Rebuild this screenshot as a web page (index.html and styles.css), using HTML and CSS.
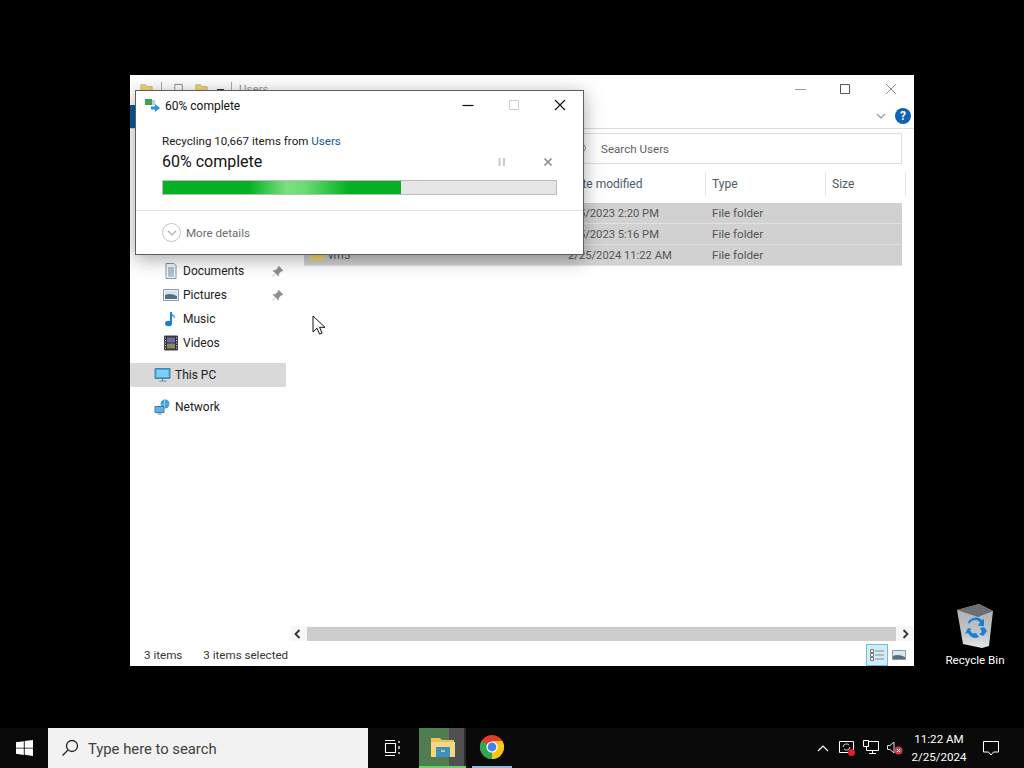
FILE: index.html
```html
<!DOCTYPE html>
<html lang="en">
<head>
<meta charset="utf-8">
<title>60% complete</title>
<link rel="stylesheet" href="styles.css">
</head>
<body>
<div class="desktop">
  <section class="explorer">
    <header class="ex-title">
      <svg class="qa-icon" viewBox="0 0 14 14"><path d="M1 2h5l1 2h6v9H1z" fill="#f3d878" stroke="#d4b35a"/></svg>
      <span class="qa-sep qa-sep-first"></span>
      <svg class="qa-icon qa-props" viewBox="0 0 14 14"><path d="M2 1.500h8v11H2z" fill="#fff" stroke="#888"/><path d="M7 8h6v5H7z" fill="#ddd" stroke="#777"/></svg>
      <svg class="qa-icon qa-new" viewBox="0 0 14 14"><path d="M1 2h5l1 2h6v9H1z" fill="#f3d878" stroke="#d4b35a"/></svg>
      <span class="qa-dash"></span>
      <span class="qa-sep qa-sep-last"></span>
      <span class="ex-name">Users</span>
      <div class="win-controls">
        <svg class="ctl" viewBox="0 0 12 12"><path d="M0 6.500h11" stroke="#9a9a9a"/></svg>
        <svg class="ctl" viewBox="0 0 12 12"><path d="M.5 1.500h9v9h-9z" fill="none" stroke="#555"/></svg>
        <svg class="ctl" viewBox="0 0 12 12"><path d="M1 1l10 10M11 1L1 11" stroke="#8a8a8a"/></svg>
      </div>
    </header>
    <div class="ribbon">
      <span class="file-tab"></span>
      <svg class="rib-chev" viewBox="0 0 10 6"><path d="M1 1l4 4 4-4" fill="none" stroke="#999" stroke-width="1.200"/></svg>
      <span class="help">?</span>
    </div>
    <div class="address">
      <div class="search">
        <svg class="search-icon" viewBox="0 0 12 12"><circle cx="6.500" cy="5" r="4" fill="none" stroke="#999"/><path d="M3.500 8L1 11" stroke="#999"/></svg>
        <span class="search-label">Search Users</span>
      </div>
    </div>
    <div class="ex-body">
      <nav class="nav">
        <div class="nav-item"><svg class="nav-icon" viewBox="0 0 16 16"><path d="M3 .5h8l2 2v13H3z" fill="#f4f8fb" stroke="#7d98ad"/><path d="M5 5h6M5 7h6M5 9h6M5 11h6M5 13h6" stroke="#6f8ea6"/></svg><span class="nav-text">Documents</span><svg class="pin" viewBox="0 0 12 12"><path d="M7 0l5 5-2 .6-2.500 2.500L7 11 1 5l3-.5 2.500-2.500zM3.500 8L.5 11.500" fill="#8f8f8f" stroke="#8f8f8f" stroke-width=".6"/></svg></div>
        <div class="nav-item"><svg class="nav-icon" viewBox="0 0 16 16"><path d="M.5 2.500h15v11H.5z" fill="#eef3f7" stroke="#8b9bab"/><path d="M2 4h12v4H2z" fill="#cfe3f1"/><path d="M2 8c4-2 8-1 12 1v3H2z" fill="#56707e"/></svg><span class="nav-text">Pictures</span><svg class="pin" viewBox="0 0 12 12"><path d="M7 0l5 5-2 .6-2.500 2.500L7 11 1 5l3-.5 2.500-2.500zM3.500 8L.5 11.500" fill="#8f8f8f" stroke="#8f8f8f" stroke-width=".6"/></svg></div>
        <div class="nav-item"><svg class="nav-icon" viewBox="0 0 16 16"><path d="M8 1v11" stroke="#1c80cf" stroke-width="2"/><path d="M8 1c1 3 5 3 4 7-.5-2-2-3-4-3z" fill="#2b95e0"/><ellipse cx="5.500" cy="12.500" rx="3.500" ry="2.700" fill="#1c80cf"/></svg><span class="nav-text">Music</span></div>
        <div class="nav-item"><svg class="nav-icon" viewBox="0 0 16 16"><path d="M1.500 1h13v14h-13z" fill="#2f2f3a" stroke="#444"/><path d="M4 2.500h8v5H4z" fill="#6c6aa8"/><path d="M4 8.500h8v5H4z" fill="#8a8a5a"/><path d="M2.500 2.500v1M2.500 5v1M2.500 7.500v1M2.500 10v1M2.500 12.500v1M13.500 2.500v1M13.500 5v1M13.500 7.500v1M13.500 10v1M13.500 12.500v1" stroke="#ddd"/></svg><span class="nav-text">Videos</span></div>
        <div class="nav-item nav-root nav-active"><svg class="nav-icon" viewBox="0 0 16 16"><path d="M.5 1.500h15v10H.5z" fill="#38a8ea" stroke="#5b7f96"/><path d="M2 3h12v7H2z" fill="#7cd0f7"/><path d="M5 14h7M8 12v2" stroke="#6f8494"/></svg><span class="nav-text">This PC</span></div>
        <div class="nav-item nav-root nav-network"><svg class="nav-icon" viewBox="0 0 16 16"><circle cx="10.500" cy="5" r="4.500" fill="#3c9cdc"/><path d="M6 6c3-1 6-1 9-.5M10 .5v9" stroke="#bfe2f6" stroke-width=".7"/><path d="M.5 7.500h9v6h-9z" fill="#5ab4ea" stroke="#4d7c9b"/><path d="M3 15h4" stroke="#6f8494"/></svg><span class="nav-text">Network</span></div>
      </nav>
      <main class="list">
        <div class="list-head">
          <span class="col col-name">Name</span>
          <span class="col col-date">Date modified</span>
          <span class="col col-type">Type</span>
          <span class="col col-size">Size</span>
        </div>
        <div class="rows">
          <div class="row"><span class="cell col-name">Administrator</span><span class="cell col-date">9/5/2023 2:20 PM</span><span class="cell col-type">File folder</span></div>
          <div class="row"><span class="cell col-name">Public</span><span class="cell col-date">9/5/2023 5:16 PM</span><span class="cell col-type">File folder</span></div>
          <div class="row"><span class="cell col-name"><svg class="row-folder" viewBox="0 0 14 12"><path d="M0 1h5l1 2h8v9H0z" fill="#f3d878"/></svg>vm5</span><span class="cell col-date">2/25/2024 11:22 AM</span><span class="cell col-type">File folder</span></div>
        </div>
        <div class="h-scroll">
          <svg class="sb-arrow" viewBox="0 0 8 10"><path d="M6 1L2 5l4 4" fill="none" stroke="#333" stroke-width="1.800"/></svg>
          <span class="sb-thumb"></span>
          <svg class="sb-arrow" viewBox="0 0 8 10"><path d="M2 1l4 4-4 4" fill="none" stroke="#333" stroke-width="1.800"/></svg>
        </div>
      </main>
    </div>
    <footer class="status">
      <span class="st-count">3 items</span>
      <span>3 items selected</span>
      <div class="views">
        <span class="view view-on"><svg viewBox="0 0 16 14" class="view-svg"><path d="M1.500 1.500h3v3h-3zM1.500 5.500h3v3h-3zM1.500 9.500h3v3h-3z" fill="#fff" stroke="#777"/><path d="M6 3h9M6 7h9M6 11h9" stroke="#8a8a8a"/></svg></span>
        <span class="view"><svg viewBox="0 0 16 14" class="view-svg"><path d="M1.500 2.500h13v9h-13z" fill="#dbe9f2" stroke="#8b9bab"/><path d="M2 8c4-2 8-1 12 1v2H2z" fill="#56707e"/></svg></span>
      </div>
    </footer>
  </section>

  <section class="dialog">
    <header class="dlg-title">
      <svg class="dlg-icon" viewBox="0 0 16 14"><path d="M0 1h7v6H0z" fill="#3aa655"/><path d="M7 2h3v5H7z" fill="#b8d0e4"/><path d="M6 8.500h4V6l5 4-5 4v-2.500H6z" fill="#2b8fdc"/></svg>
      <span class="dlg-name">60% complete</span>
      <div class="dlg-controls">
        <svg class="dctl" viewBox="0 0 12 12"><path d="M.5 6.500h11" stroke="#111" stroke-width="1.200"/></svg>
        <svg class="dctl" viewBox="0 0 12 12"><path d="M1.500 1.500h9v9h-9z" fill="none" stroke="#ccc"/></svg>
        <svg class="dctl" viewBox="0 0 12 12"><path d="M1 1l10 10M11 1L1 11" stroke="#111" stroke-width="1.100"/></svg>
      </div>
    </header>
    <div class="dlg-main">
      <p class="dlg-line">Recycling 10,667 items from <span class="link">Users</span></p>
      <div class="dlg-status">
        <span class="dlg-pct">60% complete</span>
        <svg class="op-pause" viewBox="0 0 8 10"><path d="M1.500 1v8M6 1v8" stroke="#c9c9c9" stroke-width="2"/></svg>
        <svg class="op-close" viewBox="0 0 10 10"><path d="M1.500 1.500l7 7M8.500 1.500l-7 7" stroke="#8a8a8a" stroke-width="1.600"/></svg>
      </div>
      <div class="progress"><div class="progress-fill"></div></div>
    </div>
    <footer class="dlg-foot">
      <span class="more-circle"><svg viewBox="0 0 10 6" class="more-chev"><path d="M1 1l4 4 4-4" fill="none" stroke="#aaa" stroke-width="1.100"/></svg></span>
      <span class="more-text">More details</span>
    </footer>
  </section>

  <svg class="cursor" viewBox="0 0 14 21"><path d="M1 1v16l4-3.800 2.600 6 2.500-1.100-2.600-5.800H13z" fill="#fff" stroke="#111"/></svg>

  <div class="bin">
    <svg class="bin-icon" viewBox="0 0 40 46">
      <defs><linearGradient id="binBody" x1="0" y1="0" x2="0" y2="1"><stop offset="0" stop-color="#a9adb0"/><stop offset=".7" stop-color="#c4c8cb"/><stop offset="1" stop-color="#e6e9eb"/></linearGradient></defs>
      <path d="M2 7L24 1l14 7-4 35-7 2-19-4z" fill="url(#binBody)"/>
      <path d="M2 7L24 1l14 7-15 6z" fill="#6d6e70"/>
      <path d="M14 21c3-5 8-5 11-2l-2 4 6 0 0-7-2 1c-4-4-11-3-14 2zM13 25l-3 6 3-1c3 5 7 6 11 4l-3-4c-3 1-5 0-6-3l2-1zM29 24l-4 1 2 4-3 2 4 2 4-5z" fill="#1a7fd4"/>
    </svg>
    <span class="bin-label">Recycle Bin</span>
  </div>
</div>

<footer class="taskbar">
  <span class="start"><svg class="win-logo" viewBox="0 0 17 16"><path d="M0 2.300L7.800 1.200v6.500H0zM8.700 1.100L17 0v7.700H8.700zM0 8.500h7.800v6.400L0 13.800zM8.700 8.500H17V16l-8.300-1.200z" fill="#fff"/></svg></span>
  <div class="tb-search">
    <svg class="tb-search-icon" viewBox="0 0 18 18"><circle cx="11" cy="7" r="5.500" fill="none" stroke="#222" stroke-width="1.300"/><path d="M7 11l-5.500 5.500" stroke="#222" stroke-width="1.300"/></svg>
    <span class="tb-search-text">Type here to search</span>
  </div>
  <span class="tb-btn tb-view"><svg class="tb-view-icon" viewBox="0 0 17 16"><path d="M1 .5h10M1 15.500h10M1.500 3.500h10v9h-10z" fill="none" stroke="#fff" stroke-width="1.100"/><path d="M15 1v2M15 6v3M15 12v2" stroke="#fff" stroke-width="1.300"/></svg></span>
  <span class="tb-btn tb-files"><svg class="tb-app" viewBox="0 0 24 20"><path d="M0 1h9l2 2h12v5H0z" fill="#e9c05a"/><path d="M0 5h24v15H0z" fill="#f5d77f"/><path d="M5 10h14v10H5z" fill="#3d8fc4"/><path d="M10 13h4v2h-4z" fill="#d6c27a"/></svg></span>
  <span class="tb-btn tb-chrome"><svg class="tb-app-chrome" viewBox="0 0 24 24"><circle cx="12" cy="12" r="12" fill="#e33b2e"/><path d="M12 12L1.600 18A12 12 0 0 1 1.600 6z" fill="#2fa84f"/><path d="M12 12l-10.400 6A12 12 0 0 0 12 24a12 12 0 0 0 10.400-6z" fill="#2fa84f"/><path d="M12 6h10.400A12 12 0 0 1 12 24z" fill="#fbc60f"/><circle cx="12" cy="12" r="5.600" fill="#fff"/><circle cx="12" cy="12" r="4.400" fill="#3f85f2"/></svg></span>
  <div class="tray">
    <svg class="tray-chev" viewBox="0 0 12 7"><path d="M1 6l5-5 5 5" fill="none" stroke="#fff" stroke-width="1.200"/></svg>
    <span class="tray-slot"><svg class="tray-icon" viewBox="0 0 18 18"><path d="M1.500 2.500h14v11h-14z" fill="none" stroke="#fff"/><path d="M5 8a3.500 3.500 0 0 1 6-2M12 8a3.500 3.500 0 0 1-6 2" fill="none" stroke="#ddd"/><circle cx="13.500" cy="13.500" r="3.500" fill="#e01c2e"/></svg></span>
    <span class="tray-slot"><svg class="tray-icon" viewBox="0 0 18 18"><path d="M4.500 2.500h12v9h-12zM7 14.500h7M10.500 11.500v3" fill="none" stroke="#fff"/><path d="M1.500 1.500h5v6h-5z" fill="#111" stroke="#fff"/></svg></span>
    <span class="tray-slot"><svg class="tray-icon" viewBox="0 0 18 18"><path d="M1.500 6.500h2.500L8 3v11L4 10.500H1.500z" fill="none" stroke="#ddd"/><circle cx="12.500" cy="11.500" r="4" fill="#d6394c"/><path d="M11 10l3 3M14 10l-3 3" stroke="#fff"/></svg></span>
    <div class="clock"><span>11:22 AM</span><span>2/25/2024</span></div>
    <span class="notif"><svg class="notif-icon" viewBox="0 0 16 15"><path d="M.5.500h15v10.500H10.500L8 14 5.500 11H.5z" fill="none" stroke="#fff"/></svg></span>
  </div>
</footer>
</body>
</html>
```

FILE: styles.css
```css
* { box-sizing: border-box; }
html, body { margin: 0; padding: 0; }
body {
  width: 1024px;
  height: 768px;
  overflow: hidden;
  background: #000;
  display: flex;
  flex-direction: column;
  font-family: Roboto, "Noto Sans", sans-serif;
  font-size: 11.6px;
  color: #1c1c1c;
}
.desktop { position: relative; flex: 1; }

/* Explorer window */
.explorer {
  position: absolute;
  left: 130px;
  top: 75px;
  width: 784px;
  height: 591px;
  background: #fff;
  display: flex;
  flex-direction: column;
}
.ex-title {
  height: 28px;
  display: flex;
  align-items: center;
  padding-left: 10px;
  flex: none;
}
.qa-icon { width: 13px; height: 13px; }
.qa-sep { width: 1px; height: 14px; background: #aaa; }
.qa-sep-first { margin-left: 8px; }
.qa-props { margin-left: 11px; }
.qa-new { margin-left: 9px; }
.qa-dash { width: 7px; height: 1px; background: #333; margin-left: 9px; }
.qa-sep-last { margin-left: 7px; }
.ex-name { color: #9a9a9a; margin-left: 7px; }
.win-controls {
  margin-left: auto;
  display: flex;
  gap: 33px;
  padding-right: 17px;
}
.ctl { width: 12px; height: 12px; }
.ribbon {
  height: 26px;
  flex: none;
  display: flex;
  align-items: center;
  border-bottom: 1px solid #dcdcdc;
  position: relative;
}
.file-tab { width: 6px; height: 23px; background: #0a5a9e; align-self: flex-start; margin-top: 2px; }
.rib-chev { width: 10px; height: 6px; margin-left: auto; margin-right: 9px; }
.help {
  width: 16px;
  height: 16px;
  border-radius: 50%;
  background: #0f62b0;
  color: #fff;
  font-size: 12px;
  font-weight: 700;
  line-height: 16px;
  text-align: center;
  margin-right: 3px;
}
.address {
  height: 43px;
  flex: none;
  display: flex;
  justify-content: flex-end;
  padding: 4px 12px 8px 0;
}
.search {
  width: 341px;
  border: 1px solid #dfdfdf;
  display: flex;
  align-items: center;
  padding-left: 13px;
  color: #5f5f5f;
}
.search-icon { width: 12px; height: 12px; margin-right: 14px; }
.ex-body { flex: 1; display: flex; min-height: 0; }
.nav { width: 156px; flex: none; padding-top: 87px; margin-right: 5px; font-size: 12px; }
.nav-item {
  height: 24px;
  display: flex;
  align-items: center;
  padding-left: 33px;
  position: relative;
  color: #222;
}
.nav-icon { width: 16px; height: 16px; flex: none; margin-right: 4px; }
.nav-root { padding-left: 24px; height: 24px; margin-top: 8px; }
.nav-root .nav-icon { margin-right: 4px; width: 17px; }
.nav-active { background: #d9d9d9; }
.pin { width: 11px; height: 11px; position: absolute; right: 3px; top: 7px; }

.list { flex: 1; display: flex; flex-direction: column; min-width: 0; }
.list-head { height: 24px; display: flex; align-items: center; flex: none; color: #4c5a69; margin-bottom: 7px; font-size: 12px; }
.col { height: 24px; display: flex; align-items: center; border-right: 1px solid #e5e5e5; }
.col-name { width: 271px; padding-left: 7px; flex: none; overflow: hidden; }
.col-date { width: 144px; padding-left: 6px; flex: none; white-space: nowrap; }
.col-type { width: 120px; padding-left: 6px; flex: none; }
.col-size { width: 80px; padding-left: 6px; flex: none; }
.rows { margin-left: 13px; width: 598px; flex: 1; }
.rows .col-name { width: 258px; }
.rows .col-date { font-size: 11.2px; }
.row {
  height: 21px;
  display: flex;
  align-items: center;
  background: #d1d1d1;
  color: #555;
  border-bottom: 1px solid #e2e2e2;
}
.cell { display: flex; align-items: center; }
.row-folder { width: 14px; height: 12px; margin-right: 4px; margin-left: -1px; }
.h-scroll {
  height: 15px;
  flex: none;
  margin-bottom: 3px;
  display: flex;
  align-items: center;
  gap: 3px;
  padding-right: 2px;
  background: #f7f7f7;
}
.sb-arrow { width: 13px; height: 10px; flex: none; }
.sb-thumb { flex: 1; height: 14px; background: #cdcdcd; }

.status {
  height: 22px;
  flex: none;
  display: flex;
  align-items: center;
  padding-left: 14px;
  color: #333;
}
.st-count { margin-right: 21px; }
.views { margin-left: auto; display: flex; gap: 3px; padding-right: 8px; align-items: center; }
.view { width: 22px; height: 22px; display: flex; align-items: center; justify-content: center; }
.view + .view { width: 15px; }
.view-on { background: #cdeefa; border: 1px solid #6cc0d6; }
.view-svg { width: 16px; height: 14px; flex: none; }

/* Progress dialog */
.dialog {
  position: absolute;
  left: 135px;
  top: 90px;
  width: 449px;
  height: 165px;
  background: #fff;
  border: 1px solid #5e5e5e;
  box-shadow: 0 4px 18px rgba(0, 0, 0, .35);
  display: flex;
  flex-direction: column;
}
.dlg-title { height: 28px; display: flex; align-items: center; padding-left: 9px; flex: none; }
.dlg-icon { width: 16px; height: 14px; margin-right: 4px; }
.dlg-name { color: #111; font-size: 12px; margin-top: 2px; }
.dlg-controls { margin-left: auto; display: flex; gap: 34px; padding-right: 17px; }
.dctl { width: 12px; height: 12px; }
.dlg-main { padding: 13px 26px 0; flex: none; height: 92px; border-bottom: 1px solid #e2e2e2; }
.dlg-line { margin: 0; line-height: 18px; color: #1a1a1a; }
.link { color: #0e5a9a; }
.dlg-status { height: 23px; display: flex; align-items: center; }
.dlg-pct { font-size: 16px; color: #111; flex: 1; }
.op-pause { width: 8px; height: 10px; margin-right: 37px; }
.op-close { width: 10px; height: 10px; margin-right: 4px; }
.progress {
  margin-top: 7px;
  width: 395px;
  height: 15px;
  background: #e6e6e6;
  border: 1px solid #bcbcbc;
}
.progress-fill {
  width: 60.6%;
  height: 100%;
  background: linear-gradient(90deg, #06b025 0%, #06b025 36%, #7be07f 52%, #6ada72 60%, #06b025 78%, #06b025 100%);
}
.dlg-foot { flex: 1; display: flex; align-items: center; padding-left: 26px; color: #6d6d6d; }
.more-circle {
  width: 19px;
  height: 19px;
  border: 1px solid #c4c4c4;
  border-radius: 50%;
  display: flex;
  align-items: center;
  justify-content: center;
  margin-right: 5px;
}
.more-chev { width: 10px; height: 6px; }

.cursor { position: absolute; left: 312px; top: 315px; width: 14px; height: 21px; }

.bin {
  position: absolute;
  left: 935px;
  top: 603px;
  width: 80px;
  display: flex;
  flex-direction: column;
  align-items: center;
  color: #fff;
}
.bin-icon { width: 40px; height: 46px; }
.bin-label { margin-top: 3px; line-height: 16px; white-space: nowrap; }

/* Taskbar */
.taskbar {
  height: 40px;
  flex: none;
  background: #0a0a0a;
  display: flex;
  align-items: stretch;
  color: #fff;
}
.start { width: 48px; display: flex; align-items: center; justify-content: center; }
.win-logo { width: 17px; height: 16px; }
.tb-search {
  width: 320px;
  background: #f2f2f2;
  display: flex;
  align-items: center;
  padding-left: 13px;
  color: #404040;
}
.tb-search-icon { width: 18px; height: 18px; margin-right: 9px; }
.tb-search-text { font-size: 14.8px; margin-top: 1px; }
.tb-btn { display: flex; align-items: center; justify-content: center; }
.tb-view { width: 51px; padding-right: 3px; }
.tb-view-icon { width: 17px; height: 16px; }
.tb-files {
  width: 47px;
  background: linear-gradient(90deg, #4f7d4f 0 64%, #505050 64% 96%, #2a2a2a 96%);
  border-bottom: 2px solid #5fd85f;
}
.tb-app { width: 24px; height: 20px; }
.tb-chrome { width: 40px; margin-left: 6px; border-bottom: 2px solid #8ab8e4; }
.tb-app-chrome { width: 24px; height: 24px; }
.tray { margin-left: auto; display: flex; align-items: center; padding-right: 13px; }
.tray-chev { width: 12px; height: 7px; margin-right: 6px; }
.tray-slot { width: 24px; display: flex; justify-content: center; }
.tray-icon { width: 18px; height: 18px; }
.clock {
  width: 64px;
  display: flex;
  flex-direction: column;
  align-items: center;
  line-height: 18px;
  white-space: nowrap;
}
.notif { width: 40px; display: flex; justify-content: center; }
.notif-icon { width: 16px; height: 15px; }
```
